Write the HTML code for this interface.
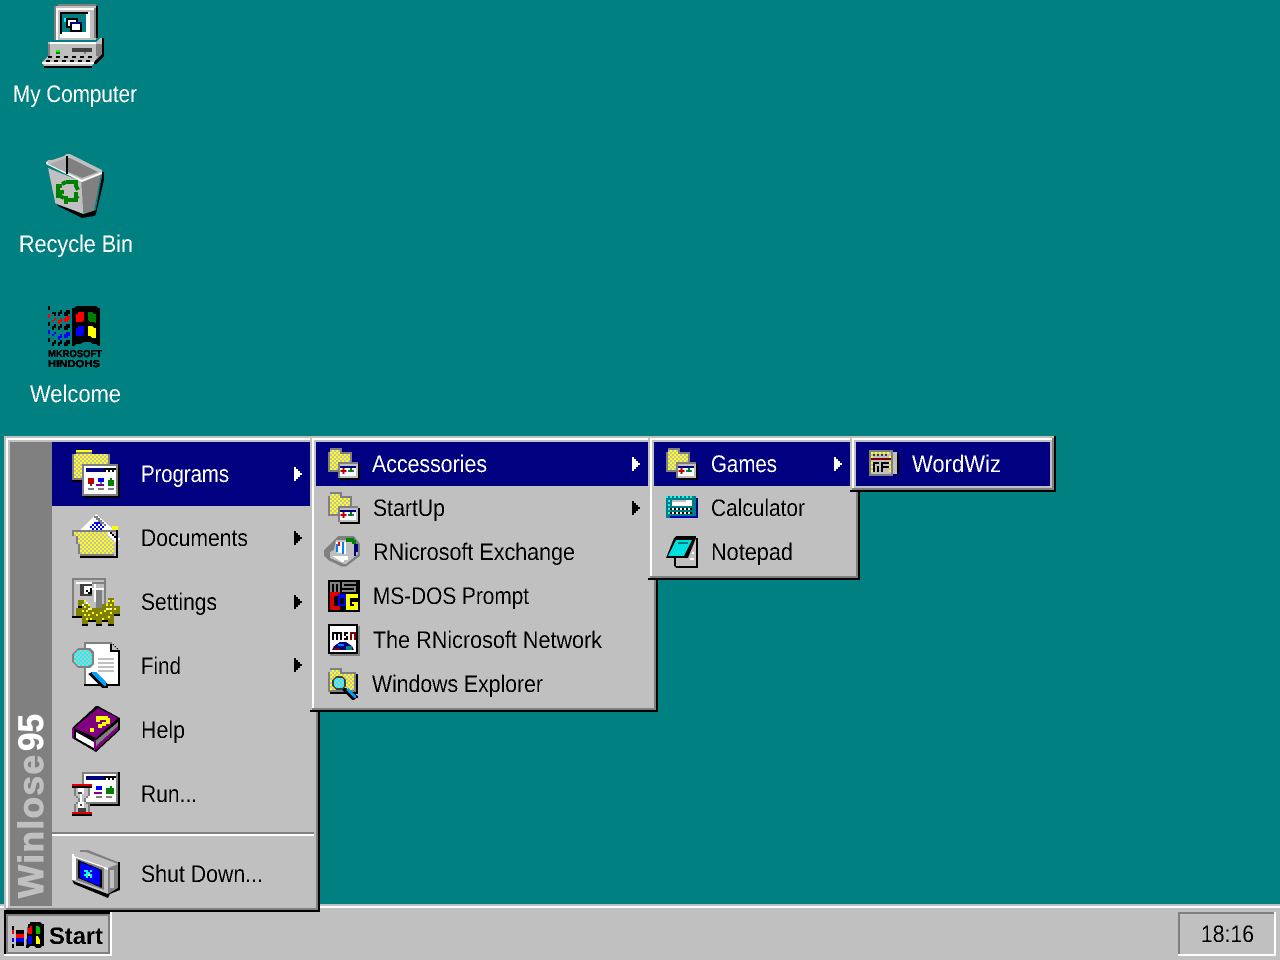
<!DOCTYPE html>
<html><head><meta charset="utf-8"><title>Winlose 95</title>
<style>
html,body{margin:0;padding:0;background:#008080;width:1280px;height:960px;overflow:hidden}
svg{display:block;position:absolute;left:0;top:0}
text{font-family:"Liberation Sans",sans-serif;font-size:24px}
.k{fill:#000}.w{fill:#fff}
</style></head><body>
<svg width="1280" height="960" viewBox="0 0 1280 960" xmlns="http://www.w3.org/2000/svg" shape-rendering="crispEdges">
<defs>
<pattern id="dy" patternUnits="userSpaceOnUse" width="12" height="12"><rect width="12" height="12" fill="#ffff00"/><rect width="6" height="6" fill="#c0c0c0"/><rect x="6" y="6" width="6" height="6" fill="#c0c0c0"/></pattern>
<pattern id="dc" patternUnits="userSpaceOnUse" width="12" height="12"><rect width="12" height="12" fill="#00ffff"/><rect width="6" height="6" fill="#c0c0c0"/><rect x="6" y="6" width="6" height="6" fill="#c0c0c0"/></pattern>
<pattern id="db" patternUnits="userSpaceOnUse" width="12" height="12"><rect width="12" height="12" fill="#fff"/><rect width="6" height="6" fill="#0000ff"/><rect x="6" y="6" width="6" height="6" fill="#0000ff"/></pattern>
<path id="a" d="M0-7h2v2h2v2h2v2h2v2h-2v2h-2v2h-2v2h-2z"/>
<filter id="th" filterUnits="userSpaceOnUse" x="0" y="0" width="1280" height="960" color-interpolation-filters="sRGB"><feComponentTransfer><feFuncA type="discrete" tableValues="0 0 1 1"/></feComponentTransfer></filter>
<g id="sf">
<rect x="60" y="54" width="36" height="12" fill="#808080"/><rect x="54" y="66" width="72" height="60" fill="#808080"/>
<rect x="60" y="60" width="30" height="60" fill="url(#dy)"/><rect x="60" y="72" width="60" height="48" fill="url(#dy)"/>
<rect x="90" y="102" width="60" height="48" fill="#000"/><rect x="84" y="96" width="60" height="48" fill="#c0c0c0"/><rect x="84" y="96" width="60" height="6" fill="#808080"/><rect x="84" y="96" width="6" height="48" fill="#808080"/>
<rect x="90" y="108" width="48" height="30" fill="#fff"/><rect x="90" y="108" width="48" height="6" fill="#000080"/>
<rect x="92" y="120" width="18" height="6" fill="#c00000"/><rect x="98" y="114" width="6" height="18" fill="#c00000"/>
<rect x="114" y="120" width="18" height="6" fill="#008080"/><rect x="120" y="114" width="6" height="12" fill="#008000"/>
</g>
</defs>

<rect width="1280" height="960" fill="#008080"/>

<!-- My Computer -->
<g transform="scale(.33333334)">
<rect x="174" y="12" width="114" height="6" fill="#808080"/>
<rect x="162" y="18" width="126" height="102" fill="#c0c0c0"/>
<rect x="162" y="18" width="6" height="102" fill="#808080"/><rect x="168" y="24" width="114" height="6" fill="#fff"/><rect x="168" y="24" width="6" height="96" fill="#fff"/>
<rect x="288" y="18" width="6" height="96" fill="#000"/><rect x="282" y="24" width="6" height="90" fill="#808080"/>
<rect x="180" y="36" width="90" height="78" fill="#fff"/><rect x="180" y="36" width="84" height="6" fill="#000"/><rect x="180" y="36" width="6" height="66" fill="#000"/><rect x="186" y="42" width="72" height="54" fill="#008080"/>
<rect x="192" y="54" width="6" height="12" fill="#00ffff"/><rect x="198" y="54" width="36" height="30" fill="#000"/><rect x="204" y="60" width="24" height="18" fill="#fff"/>
<rect x="210" y="66" width="36" height="30" fill="#000"/><rect x="210" y="66" width="36" height="6" fill="#000080"/><rect x="216" y="72" width="24" height="18" fill="#fff"/>
<path d="M144 126h144l12-12h12v54l-24 24h-6v-18h-138z" fill="#000"/>
<path d="M144 126h144l12-12h6v48l-18 18h-144z" fill="#c0c0c0"/><rect x="150" y="126" width="138" height="6" fill="#fff"/><rect x="144" y="132" width="6" height="42" fill="#808080"/><path d="M288 132h18v30l-18 18z" fill="#808080"/>
<rect x="168" y="150" width="12" height="6" fill="#00ff00"/><rect x="168" y="156" width="12" height="6" fill="#008000"/><rect x="216" y="144" width="60" height="12" fill="#404040"/><rect x="252" y="156" width="6" height="6" fill="#808080"/>
<path d="M144 168h150l-18 30h-144l-6-12z" fill="#c0c0c0"/><path d="M132 198h144v6h-144z" fill="#000"/>
<path d="M144 168h12v6h-12zM168 168h12v6h-12zM192 168h12v6h-12zM216 168h12v6h-12zM240 168h12v6h-12zM264 168h12v6h-12zM138 180h12v6h-12zM162 180h12v6h-12zM186 180h12v6h-12zM210 180h12v6h-12zM234 180h12v6h-12zM258 180h12v6h-12z" fill="#000"/>
<rect x="126" y="186" width="156" height="6" fill="#fff"/>
</g>

<!-- Recycle Bin -->
<g transform="translate(0,140) scale(.33333334)">
<path d="M306 96h6v24l-24 102-6 6-36 6-72-36-6-6 84 30 36-12 18-102z" fill="#000"/>
<path d="M144 84l100 40 6 98-84-32z" fill="#c0c0c0"/>
<path d="M244 124l60-26-22 114-32 10z" fill="#808080"/>
<path d="M144 72l54-24 102 48-54 24z" fill="#808080"/>
<path d="M150 72l48-20 4 50z" fill="#c0c0c0"/>
<path d="M138 66l6-6h12l36-12 6-6h12l96 48v6l-60 24-108-48z" fill="#c0c0c0"/>
<path d="M150 72l48-18 12 0 84 42-48 18z" fill="#808080"/><path d="M150 72l48-18v48z" fill="#a8a8a8"/>
<path d="M138 66h6v6l102 48 60-24v6l-60 24-108-54z" fill="#fff"/>
<rect x="198" y="48" width="6" height="54" fill="#000"/>
<path d="M174 174v-36h12M186 132l12-6M210 126h18v12l6 12M234 168l-12 12h-24M180 168l12 6" fill="none" stroke="#008000" stroke-width="12"/>
<path d="M168 150h24v12h-6v6h-6v-6h-12zM222 156h12v30h-12zM192 168h12v24h-12zM198 120h18v12h-18z" fill="#008000"/>
</g>

<!-- Welcome -->
<g transform="translate(0,290) scale(.33333334)">
<path d="M228 48h60l6 6h6v114h-6l-6-6h-12l-6-6h-18l-12 6h-12l-6 6h-6v-114h6z" fill="#000"/>
<path d="M228 72h6v-6h12l6-0v24l-6 6h-18z" fill="#ff0000"/><path d="M264 66h12l6 6h6v30l-6-6h-12l-6-6z" fill="#008000"/><path d="M228 114h6v-6h18v24l-6 6h-18z" fill="#0000ff"/><path d="M264 108h12l6 6h6v30h-12l-6-6h-6z" fill="#ffff00"/>
<path d="M144 48h6v12h-6zM162 66h6v-6h-0v18h-6v-6h-6v-6h6zM180 60h6v12h-6v6h-6v-12h6zM198 60h12v12h-6v6h-12v-12h6zM144 96h6v12h-6zM162 102h6v12h-6v6h-6v-12h6zM180 102h6v12h-6v6h-6v-12h6zM198 102h12v12h-6v6h-12v-12h6zM144 144h6v12h-6zM162 150h6v12h-6v6h-6v-12h6zM180 150h6v12h-6v6h-6v-12h6zM198 150h12v12h-6v6h-12v-12h6z" fill="#000"/>
<path d="M144 72h6v12h-6zM162 84h6v6h-6v6h-6v-6h6zM180 84h6v12h-6v6h-6v-12h6zM198 78h12v12h-6v6h-12v-12h6z" fill="#ff0000"/>
<path d="M144 120h6v12h-6zM162 126h6v6h-6v6h-6v-6h6zM180 132h6v12h-6v6h-6v-12h6zM198 126h12v12h-6v6h-12v-12h6z" fill="#0000ff"/>
</g>

<!-- Taskbar -->
<rect y="904" width="1280" height="56" fill="#c0c0c0"/><rect y="906" width="1280" height="2" fill="#fff"/>
<rect x="4" y="912" width="108" height="44" fill="#fff"/><rect x="4" y="912" width="106" height="42" fill="#000"/><rect x="6" y="914" width="104" height="40" fill="#808080"/><rect x="8" y="916" width="100" height="36" fill="#c0c0c0"/>
<g transform="translate(0,896) scale(.33333334)">
<path d="M84 84h6v-6h30l6 6h6v66h-6l-6 6h-12l-6-6h-12l-6 6h-6z" fill="#000"/>
<path d="M84 96h6v-6h6v24h-12z" fill="#ff0000"/><path d="M108 90h6l6 6v18h-12z" fill="#00c000"/><path d="M84 120h12v24h-12z" fill="#0000ff"/><path d="M108 120h6l6 12v12h-12z" fill="#ffff00"/>
<path d="M36 90h6v12h-6zM48 102h24v12h-24zM48 138h24v12h-24zM36 144h6v12h-6z" fill="#000"/>
<path d="M36 102h6v12h-6zM48 114h24v12h-24z" fill="#ff0000"/><path d="M36 126h6v12h-6zM48 126h24v12h-24z" fill="#0000ff"/>
</g>
<rect x="1178" y="912" width="98" height="44" fill="#fff"/><rect x="1178" y="912" width="96" height="42" fill="#808080"/><rect x="1180" y="914" width="94" height="40" fill="#c0c0c0"/>

<!-- Start menu -->
<rect x="4" y="436" width="316" height="476" fill="#000"/><rect x="4" y="436" width="314" height="474" fill="#c0c0c0"/><rect x="6" y="438" width="312" height="472" fill="#808080"/><rect x="6" y="438" width="310" height="470" fill="#fff"/><rect x="8" y="440" width="308" height="468" fill="#c0c0c0"/>
<rect x="10" y="442" width="42" height="464" fill="#808080"/>
<rect x="52" y="442" width="262" height="64" fill="#000080"/>
<rect x="52" y="832" width="262" height="2" fill="#808080"/><rect x="52" y="834" width="262" height="2" fill="#fff"/>

<!-- Programs icon -->
<g transform="translate(60,440) scale(.33333334)">
<path d="M48 30h48v12h54v84h-84v-6h-30v-78h12z" fill="#808080"/><rect x="48" y="30" width="48" height="6" fill="#ffff00"/><rect x="42" y="42" width="102" height="72" fill="url(#dy)"/><rect x="36" y="120" width="30" height="6" fill="#000"/>
<rect x="72" y="78" width="108" height="96" fill="#000"/><rect x="66" y="72" width="108" height="96" fill="#808080"/><rect x="72" y="78" width="96" height="84" fill="#fff"/><rect x="78" y="84" width="90" height="72" fill="#fff"/><rect x="78" y="84" width="54" height="12" fill="#000080"/><path d="M132 84h36v12h-36z" fill="#000"/><path d="M138 90h6v6h-6zM150 90h6v6h-6zM162 90h6v6h-6z" fill="#fff"/>
<rect x="84" y="114" width="18" height="18" fill="#c00000"/><rect x="90" y="132" width="6" height="6" fill="#404040"/>
<rect x="114" y="114" width="18" height="12" fill="#0000ff"/><rect x="108" y="132" width="24" height="6" fill="#800080"/><rect x="120" y="126" width="6" height="6" fill="#00a0a0"/>
<rect x="150" y="114" width="6" height="6" fill="#008000"/><rect x="144" y="120" width="18" height="18" fill="#008000"/>
<path d="M84 144h18v6h-18zM114 144h18v6h-18zM144 144h18v6h-18z" fill="#808080"/>
</g>
<!-- Documents icon -->
<g transform="translate(60,440) scale(.33333334)">
<path d="M60 270l48-48 54 48z" fill="#fff"/><path d="M60 264h6v-6h12v-6h6v-6h6v-6h6v-6h6v-6h12v6h6v6h6v6h6v6h6v6h-12v-6h-6v-6h-6v-6h-6v-6h-12v6h-6v6h-6v6h-6v6h-12v6h-12z" fill="#808080"/>
<rect x="90" y="252" width="42" height="18" fill="url(#db)"/><rect x="102" y="246" width="18" height="6" fill="#0000ff"/>
<rect x="156" y="258" width="18" height="12" fill="#ffff00"/>
<path d="M36 270h132v6h-6v72h-102v-6h-6v-30h-6v-24h-12z" fill="#808080"/><path d="M42 276h120v66h-102v-30h-6v-24h-12z" fill="url(#dy)"/>
<rect x="60" y="348" width="114" height="6" fill="#000"/><rect x="168" y="270" width="6" height="84" fill="#000"/>
<path d="M144 276h12v6h6v6h6v6h12v6h-12v6h-6v-6h-6v-6h-6v-6h-6z" fill="#fff"/><path d="M150 276h6v6h6v6h6v6h6v6h-6v-6h-6v-6h-6v-6h-6z" fill="#000"/>
</g>
<!-- Settings icon -->
<g transform="translate(60,570) scale(.33333334)">
<rect x="36" y="24" width="102" height="120" fill="#808080"/><rect x="42" y="30" width="90" height="108" fill="#c0c0c0"/><rect x="48" y="36" width="84" height="6" fill="#fff"/>
<rect x="36" y="138" width="30" height="6" fill="#000"/>
<rect x="60" y="42" width="36" height="36" fill="#404040"/><rect x="72" y="48" width="24" height="24" fill="#fff"/><path d="M78 60h6v6h6v-12h6v18h-12v-6h-6z" fill="#000"/>
<rect x="96" y="36" width="36" height="6" fill="#808080"/><rect x="102" y="42" width="6" height="72" fill="#fff"/><rect x="96" y="54" width="36" height="6" fill="#fff"/>
<path d="M66 108h96v48h-96zM48 120h18v24h-18zM162 114h18v24h-18zM54 96h18v18h-18zM144 90h18v18h-18zM66 156h18v12h-18zM108 156h18v12h-18zM144 156h18v12h-18z" fill="#000"/>
<path d="M66 102h96v48h-96zM48 114h18v24h-18zM162 108h18v24h-18zM54 90h18v18h-18zM144 84h18v18h-18zM66 150h18v12h-18zM108 150h18v12h-18zM144 150h18v12h-18z" fill="#808000"/>
<path d="M90 96h36v18h-36z" fill="#c0c0c0"/>
<path d="M108 60h18v54h-18z" fill="#808080"/>
<path d="M72 90h6v6h-6zM84 102h6v6h-6zM72 108h6v6h-6zM66 120h6v6h-6zM78 120h6v6h-6zM90 114h6v6h-6zM72 132h6v6h-6zM84 132h6v6h-6zM96 126h6v6h-6zM108 132h6v6h-6zM120 126h6v6h-6zM132 120h6v6h-6zM144 114h6v6h-6zM138 102h6v6h-6zM150 102h6v6h-6zM144 90h6v6h-6zM156 90h6v6h-6zM150 126h6v6h-6zM162 114h6v6h-6zM144 138h6v6h-6zM126 144h6v6h-6zM90 144h6v6h-6zM78 144h6v6h-6z" fill="#ffff00"/>
<path d="M66 102h6v6h-6zM78 96h6v6h-6zM138 114h6v6h-6zM150 114h6v6h-6zM84 114h6v6h-6z" fill="#fff"/>
</g>
<!-- Find icon -->
<g transform="translate(60,570) scale(.33333334)">
<path d="M72 222h84l24 24v96h-108z" fill="#fff"/><path d="M72 216h84v6h6v6h6v6h6v6h6v108h-108zM78 222v120h96v-96h-24v-24z" fill="#000" fill-rule="evenodd"/>
<path d="M72 216h84v6h-78v120h-6z" fill="#808080"/>
<path d="M156 222l18 18h-18z" fill="#c0c0c0"/>
<path d="M114 264h48v6h-48zM114 276h48v6h-48zM114 288h48v6h-48zM114 300h48v6h-48z" fill="#c0c0c0"/>
<path d="M54 234h36l12 12v36l-12 12h-36l-18-18v-24z" fill="#808080"/><path d="M54 240h30l12 12v30l-12 6h-30l-12-12v-24z" fill="url(#dc)"/>
<path d="M96 306l48 36v12h-18l-42-42z" fill="#000"/><path d="M96 306l12 0 30 30v12h-6l-36-36z" fill="#00a0ff"/>
</g>
<!-- Help icon -->
<g transform="translate(60,700) scale(.33333334)">
<path d="M36 84l72-66h6l66 36v36l-72 66-72-42z" fill="#000"/>
<path d="M42 84l72-60 60 30-66 60z" fill="#800080"/>
<path d="M48 96l54 30v18l-54-30z" fill="#fff"/><path d="M102 126l72-60v18l-72 60z" fill="#808080"/>
<path d="M36 84h6v30h-6zM102 120h6v30h-6z" fill="#800080"/><path d="M108 138l66-60v12l-66 60z" fill="#800080"/>
<path d="M108 48h36v6h6v18h-12v6h-12v6h-12v-12h12v-6h12v-6h-18v6h-12z" fill="#ffff00"/><path d="M90 84h12v12h-12z" fill="#ffff00"/>
</g>
<!-- Run icon -->
<g transform="translate(60,700) scale(.33333334)">
<rect x="72" y="216" width="108" height="102" fill="#000"/><rect x="66" y="216" width="108" height="96" fill="#808080"/><rect x="72" y="222" width="96" height="84" fill="#fff"/><rect x="78" y="228" width="54" height="12" fill="#000080"/><rect x="132" y="228" width="36" height="12" fill="#000"/><path d="M138 234h6v6h-6zM150 234h6v6h-6zM162 234h6v6h-6z" fill="#fff"/>
<rect x="108" y="258" width="18" height="12" fill="#0000ff"/><rect x="102" y="276" width="24" height="6" fill="#800080"/><rect x="150" y="258" width="6" height="6" fill="#008000"/><rect x="138" y="264" width="24" height="18" fill="#008000"/>
<path d="M108 288h18v6h-18zM138 288h18v6h-18z" fill="#808080"/>
<path d="M42 258h48v30h-6v6h-6v12h6v6h6v24h-48v-24h6v-6h6v-12h-6v-6h-6z" fill="#808080"/>
<path d="M48 264h36v24h-6v6h-6v12h6v6h6v24h-36v-24h6v-6h6v-12h-6v-6h-6z" fill="#c0c0c0"/>
<path d="M54 264h18v18h-6v12h-0v12h6v18h-18v-18h6v-12h0v-12h-6z" fill="#fff"/>
<path d="M54 276h12v6h-12zM60 312h6v6h-6zM54 324h24v12h-24z" fill="#404040"/>
<rect x="36" y="252" width="60" height="12" fill="#000"/><rect x="36" y="252" width="60" height="6" fill="#e00000"/><rect x="36" y="336" width="60" height="12" fill="#000"/><rect x="36" y="336" width="60" height="6" fill="#e00000"/>
</g>
<!-- Shut Down icon -->
<g transform="translate(60,700) scale(.33333334)">
<path d="M174 486h6v84l-30 12-6 12-102-42-6-12 108 42 6-12 24-12z" fill="#000"/>
<path d="M144 504l30-12v72l-30 18z" fill="#808080"/><rect x="150" y="510" width="12" height="54" fill="#c0c0c0"/>
<path d="M36 462l24-12h24l90 36v6l-30 12z" fill="#c0c0c0"/><path d="M60 450h24l90 36v6l-96-36h-18z" fill="#808080"/>
<path d="M36 462l108 42v78l-96-36-12-6z" fill="#c0c0c0"/>
<path d="M36 462h6v78h-6zM42 468l102 36v6l-96-36v66h-6z" fill="#fff"/>
<path d="M48 474l84 30v66l-84-30z" fill="#808080"/>
<path d="M54 480l72 30v54l-72-30z" fill="#000"/><path d="M60 486l60 24v48l-60-24z" fill="#0000ff"/>
<path d="M78 510h6v6h6v-6h6v6h-6v6h6v12h-6v-6h-6v6h-6v-6h-6v-6h6v-6h-6v-6h6z" fill="#00ffff"/><rect x="84" y="522" width="6" height="6" fill="#ffff00"/>
</g>

<!-- Sub menu 1 -->
<rect x="310" y="436" width="348" height="276" fill="#000"/><rect x="310" y="436" width="346" height="274" fill="#c0c0c0"/><rect x="312" y="438" width="344" height="272" fill="#808080"/><rect x="312" y="438" width="342" height="270" fill="#fff"/><rect x="314" y="440" width="340" height="268" fill="#c0c0c0"/>
<rect x="316" y="442" width="336" height="44" fill="#000080"/>
<g transform="translate(310,430) scale(.33333334)"><use href="#sf"/><use href="#sf" y="132"/>
<!-- Exchange -->
<path d="M66 336l18-18h48l18 24v36l-42 32h-12l-42-20-12-12v-18z" fill="#808080"/>
<path d="M60 366l12-6 6-30h36l24 12 6 30-36 30h-6l-42-18z" fill="#c0c0c0"/>
<path d="M78 336h30v36h-6l-24-6z" fill="#fff"/><path d="M78 342h6v24h-6zM96 336h6v36h-6z" fill="#0080ff"/><path d="M84 336h6v12h-6z" fill="#ff0000"/>
<path d="M108 324h24v6h6v12h-12v-6h-18z" fill="#008000"/><path d="M132 342h12v24h-6v12h-6z" fill="#000080"/><path d="M66 378h48v12h-12v6h-6z" fill="#fff"/>
<!-- DOS -->
<rect x="54" y="450" width="96" height="96" fill="#000"/>
<path d="M60 456h30v30h-6v-24h-6v24h-6v-24h-6v24h-6zM96 456h42v6h-36v6h36v18h-42v-6h36v-6h-36z" fill="#808080"/>
<rect x="60" y="486" width="30" height="54" fill="#e00000"/><rect x="72" y="498" width="12" height="30" fill="#000"/>
<path d="M84 492h24v36h-24z" fill="#0000ff"/><rect x="90" y="504" width="12" height="18" fill="#000"/>
<path d="M108 492h36v12h-24v24h12v-6h-6v-6h18v24h-36z" fill="#ffff00"/>
<!-- MSN -->
<rect x="60" y="588" width="90" height="90" fill="#808080"/><rect x="54" y="582" width="90" height="90" fill="#000"/><rect x="60" y="588" width="78" height="78" fill="#fff"/>
<path d="M66 606h30v24h-6v-18h-6v18h-6v-18h-6v18h-6zM102 606h12v6h-6v6h6v12h-12v-6h6v-6h-6z" fill="#000"/><path d="M120 606h18v24h-6v-18h-6v18h-6z" fill="#800000"/>
<path d="M66 660l6-12 18-12h18l18 12 6 12z" fill="#000080"/><path d="M84 642h18v6h-18z" fill="#0080ff"/><path d="M72 654h18v6h-18z" fill="#800000"/><path d="M108 648h18v12h-18z" fill="#008080"/>
<!-- Explorer -->
<rect x="60" y="714" width="36" height="12" fill="#808080"/><rect x="54" y="726" width="84" height="60" fill="#808080"/><rect x="60" y="720" width="30" height="12" fill="url(#dy)"/><rect x="60" y="732" width="72" height="48" fill="url(#dy)"/><rect x="60" y="786" width="78" height="6" fill="#000"/><rect x="138" y="732" width="6" height="60" fill="#000"/>
<path d="M78 738h18l12 12v18l-12 12h-18l-12-12v-18z" fill="#404040"/><path d="M78 744h18l6 6v18l-6 6h-18l-6-6v-18z" fill="url(#dc)"/>
<path d="M102 774h6l36 24v6h-6l-6 6h-6l-30-30z" fill="#000"/><path d="M108 780l24 24h6v-6l-24-24z" fill="#00a0ff"/>
</g>

<!-- Sub menu 2 -->
<rect x="648" y="436" width="212" height="144" fill="#000"/><rect x="648" y="436" width="210" height="142" fill="#c0c0c0"/><rect x="650" y="438" width="208" height="140" fill="#808080"/><rect x="650" y="438" width="206" height="138" fill="#fff"/><rect x="652" y="440" width="204" height="136" fill="#c0c0c0"/>
<rect x="654" y="442" width="200" height="44" fill="#000080"/>
<g transform="translate(648,430) scale(.33333334)"><use href="#sf"/>
<!-- Calculator -->
<rect x="54" y="198" width="90" height="66" fill="#008080"/>
<path d="M54 198h6v6h-6zM66 198h6v6h-6zM78 198h6v6h-6zM90 198h6v6h-6zM102 198h6v6h-6zM114 198h6v6h-6zM126 198h6v6h-6zM60 210h6v6h-6zM60 222h6v6h-6zM60 234h6v6h-6zM60 246h6v6h-6z" fill="#00ffff"/>
<rect x="72" y="210" width="60" height="18" fill="#fff"/><rect x="72" y="210" width="42" height="6" fill="#c0c0c0"/>
<path d="M66 234h66v6h-66zM66 246h66v6h-66z" fill="#000"/><path d="M72 234h6v6h-6zM84 234h6v6h-6zM96 234h6v6h-6zM108 234h6v6h-6zM120 234h6v6h-6zM72 246h6v6h-6zM84 246h6v6h-6zM96 246h6v6h-6zM108 246h6v6h-6zM120 246h6v6h-6z" fill="#fff"/>
<rect x="66" y="258" width="78" height="6" fill="#0000c0"/><rect x="144" y="204" width="6" height="60" fill="#000080"/><rect x="54" y="258" width="12" height="6" fill="#008080"/>
<!-- Notepad -->
<path d="M78 384h6v24h60v-84h6v90h-66l-6-6z" fill="#000"/>
<path d="M54 384L78 324l6-6h60v6L120 384z" fill="#000"/>
<path d="M60 378L84 330h48L108 378z" fill="#00e0e0"/><rect x="90" y="336" width="30" height="6" fill="#008080"/>
<path d="M132 366h6v6h-6zM126 384h12v6h-12z" fill="#fff"/>
</g>

<!-- Sub menu 3 -->
<rect x="850" y="436" width="206" height="56" fill="#000"/><rect x="850" y="436" width="204" height="54" fill="#c0c0c0"/><rect x="852" y="438" width="202" height="52" fill="#808080"/><rect x="852" y="438" width="200" height="50" fill="#fff"/><rect x="854" y="440" width="198" height="48" fill="#c0c0c0"/>
<rect x="856" y="442" width="194" height="44" fill="#000080"/>
<g transform="translate(645,430) scale(.33333334)">
<rect x="672" y="60" width="72" height="78" fill="#808080"/><rect x="744" y="66" width="12" height="66" fill="#c0c0c0"/><rect x="756" y="72" width="6" height="60" fill="#000"/>
<rect x="678" y="66" width="60" height="66" fill="#c0c0c0"/><rect x="678" y="84" width="60" height="6" fill="#800000"/>
<path d="M684 72h6v6h-6zM696 72h6v6h-6zM708 72h6v6h-6zM720 72h6v6h-6z" fill="#404040"/>
<path d="M678 66h6v6h-6zM690 66h6v6h-6zM702 66h6v6h-6zM714 66h6v6h-6zM726 66h6v6h-6zM678 78h6v6h-6zM732 78h6v6h-6zM678 96h6v6h-6zM678 108h6v6h-6zM732 96h6v6h-6zM732 108h6v6h-6zM732 120h6v6h-6zM678 120h6v6h-6z" fill="#ffff00"/>
<path d="M684 96h18v6h-18zM684 102h6v24h-6zM696 108h6v18h-6zM708 96h24v6h-24zM708 108h24v6h-24zM708 102h6v24h-6z" fill="#000"/>
</g>

<!-- Arrows -->
<use href="#a" x="294" y="474" fill="#fff"/><use href="#a" x="294" y="538"/><use href="#a" x="294" y="602"/><use href="#a" x="294" y="665"/>
<use href="#a" x="632" y="464" fill="#fff"/><use href="#a" x="632" y="508"/><use href="#a" x="834" y="464" fill="#fff"/>

<!-- Text -->
<g shape-rendering="auto" filter="url(#th)" text-rendering="geometricPrecision">
<g class="w">
<text x="13" y="102" textLength="124" lengthAdjust="spacingAndGlyphs">My Computer</text>
<text x="19" y="252" textLength="114" lengthAdjust="spacingAndGlyphs">Recycle Bin</text>
<text x="30" y="402" textLength="91" lengthAdjust="spacingAndGlyphs">Welcome</text>
<text x="141" y="482" textLength="88" lengthAdjust="spacingAndGlyphs">Programs</text>
<text x="372" y="472" textLength="115" lengthAdjust="spacingAndGlyphs">Accessories</text>
<text x="711" y="472" textLength="66" lengthAdjust="spacingAndGlyphs">Games</text>
<text x="912" y="472" textLength="89" lengthAdjust="spacingAndGlyphs">WordWiz</text>
</g>
<g class="k">
<text x="141" y="546" textLength="107" lengthAdjust="spacingAndGlyphs">Documents</text>
<text x="141" y="610" textLength="76" lengthAdjust="spacingAndGlyphs">Settings</text>
<text x="141" y="674" textLength="40" lengthAdjust="spacingAndGlyphs">Find</text>
<text x="141" y="738" textLength="44" lengthAdjust="spacingAndGlyphs">Help</text>
<text x="141" y="802" textLength="56" lengthAdjust="spacingAndGlyphs">Run...</text>
<text x="141" y="882" textLength="122" lengthAdjust="spacingAndGlyphs">Shut Down...</text>
<text x="373" y="516" textLength="72" lengthAdjust="spacingAndGlyphs">StartUp</text>
<text x="373" y="560" textLength="202" lengthAdjust="spacingAndGlyphs">RNicrosoft Exchange</text>
<text x="373" y="604" textLength="156" lengthAdjust="spacingAndGlyphs">MS-DOS Prompt</text>
<text x="373" y="648" textLength="229" lengthAdjust="spacingAndGlyphs">The RNicrosoft Network</text>
<text x="372" y="692" textLength="171" lengthAdjust="spacingAndGlyphs">Windows Explorer</text>
<text x="711" y="516" textLength="94" lengthAdjust="spacingAndGlyphs">Calculator</text>
<text x="711" y="560" textLength="82" lengthAdjust="spacingAndGlyphs">Notepad</text>
<text x="1201" y="942" textLength="53" lengthAdjust="spacingAndGlyphs">18:16</text>
<text x="49" y="944" textLength="54" lengthAdjust="spacingAndGlyphs" font-weight="bold">Start</text>
<text x="48" y="357" textLength="54" lengthAdjust="spacingAndGlyphs" font-weight="bold" style="font-size:10px" stroke="#000" stroke-width=".5">MKROSOFT</text>
<text x="48" y="367" textLength="52" lengthAdjust="spacingAndGlyphs" font-weight="bold" style="font-size:10px" stroke="#000" stroke-width=".5">HINDOHS</text>
</g>
</g>
<g shape-rendering="auto">
<text transform="translate(43,898) rotate(-90)" textLength="143" lengthAdjust="spacing" font-weight="bold" style="font-size:35px" fill="#c0c0c0" stroke="#c0c0c0" stroke-width="1">Winlose</text>
<text transform="translate(43,751) rotate(-90)" textLength="37" lengthAdjust="spacingAndGlyphs" font-weight="bold" style="font-size:35px" fill="#fff" stroke="#fff" stroke-width=".6">95</text>
</g>
</svg>
</body></html>
